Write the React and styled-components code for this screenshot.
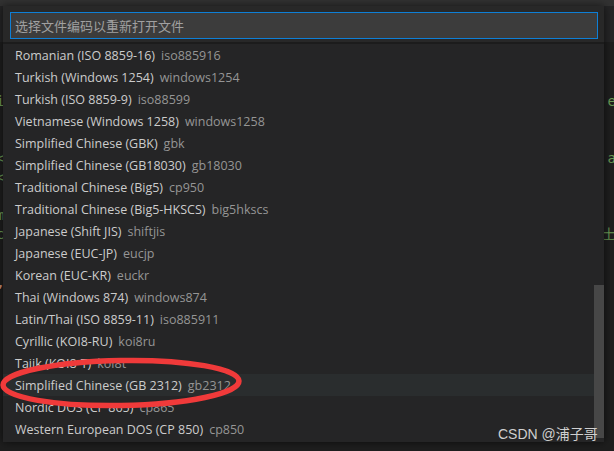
import React from "react";
import styled, { createGlobalStyle } from "styled-components";

const GlobalStyle = createGlobalStyle`
  html, body { margin: 0; padding: 0; background: #1e1e1e; overflow: hidden; }
  #root { width: 614px; height: 451px; }
`;

const Window = styled.div`
  position: relative;
  width: 614px;
  height: 451px;
  overflow: hidden;
  background: #1e1e1e;
  display: flex;
  flex-direction: column;
`;

const TitleStrip = styled.div`
  height: 6px;
  background: #323232;
  flex: none;
`;

const TabBar = styled.div`
  height: 36px;
  background: #252526;
  flex: none;
`;

const EditorBody = styled.div`
  flex: 1;
  padding-top: 50px;
  display: flex;
  flex-direction: column;
`;

const CodeLine = styled.div`
  height: 19px;
  display: flex;
  justify-content: space-between;
  align-items: center;
  font-family: "DejaVu Sans Mono", monospace;
  font-size: 14px;
  line-height: 19px;
`;

const Glyph = styled.span`
  color: ${(p) => p.$color || "#6a9955"};
  margin-left: ${(p) => (p.$side === "left" ? "-4px" : "0")};
  margin-right: ${(p) => (p.$side === "right" ? "-2px" : "0")};
`;

const QuickPick = styled.div`
  position: absolute;
  left: 3px;
  top: 6px;
  width: 601px;
  height: 436px;
  background: #252526;
  box-shadow: 0 0 8px rgba(0, 0, 0, 0.6);
  display: flex;
  flex-direction: column;
  font-family: "Open Sans", "Noto Sans", sans-serif;
`;

const Header = styled.div`
  background: #282828;
  padding: 6px 6px 3px 7px;
  flex: none;
`;

const InputBox = styled.div`
  height: 25px;
  border: 1px solid #0e7fd6;
  background: #3c3c3c;
  display: flex;
  align-items: center;
  padding-left: 4px;
  font-family: "Noto Sans CJK SC", "Noto Sans", sans-serif;
  font-size: 13px;
  color: #a0a0a0;
`;

const Separator = styled.div`
  height: 2px;
  background: #1c1c1c;
  flex: none;
`;

const List = styled.div`
  position: relative;
  flex: 1;
  display: flex;
  flex-direction: column;
`;

const Row = styled.div`
  height: 22px;
  display: flex;
  align-items: center;
  gap: 6px;
  padding-left: 12px;
  background: ${(p) => (p.$active ? "#2a2d2e" : "transparent")};
  white-space: nowrap;
`;

const Label = styled.span`
  color: #cccccc;
  font-size: 12.5px;
`;

const Desc = styled.span`
  color: #959595;
  font-size: 12.5px;
`;

const ScrollThumb = styled.div`
  position: absolute;
  right: 0;
  top: 241px;
  width: 10px;
  height: 153px;
  background: #474747;
`;

const Annotation = styled.svg`
  position: absolute;
  left: 0;
  top: 354px;
  pointer-events: none;
`;

const Watermark = styled.div`
  position: absolute;
  left: 498px;
  top: 424px;
  font-family: "Liberation Sans", "Noto Sans CJK SC", sans-serif;
  font-size: 14px;
  line-height: 20px;
  color: #cfcfcf;
  white-space: nowrap;
`;

const items = [
  ["Romanian (ISO 8859-16)", "iso885916"],
  ["Turkish (Windows 1254)", "windows1254"],
  ["Turkish (ISO 8859-9)", "iso88599"],
  ["Vietnamese (Windows 1258)", "windows1258"],
  ["Simplified Chinese (GBK)", "gbk"],
  ["Simplified Chinese (GB18030)", "gb18030"],
  ["Traditional Chinese (Big5)", "cp950"],
  ["Traditional Chinese (Big5-HKSCS)", "big5hkscs"],
  ["Japanese (Shift JIS)", "shiftjis"],
  ["Japanese (EUC-JP)", "eucjp"],
  ["Korean (EUC-KR)", "euckr"],
  ["Thai (Windows 874)", "windows874"],
  ["Latin/Thai (ISO 8859-11)", "iso885911"],
  ["Cyrillic (KOI8-RU)", "koi8ru"],
  ["Tajik (KOI8-T)", "koi8t"],
  ["Simplified Chinese (GB 2312)", "gb2312"],
  ["Nordic DOS (CP 865)", "cp865"],
  ["Western European DOS (CP 850)", "cp850"],
];

const codeLines = [
  { l: "i", r: "e" },
  {},
  {},
  { l: "<", r: "a" },
  { l: "<" },
  {},
  { l: "m" },
  { l: "c", r: "士" },
  {},
  {},
  { l: "\u2019", lc: "#ce9178" },
];

export default function App() {
  return (
    <>
      <GlobalStyle />
      <Window>
        <TitleStrip />
        <TabBar />
        <EditorBody>
          {codeLines.map((c, i) => (
            <CodeLine key={i}>
              <Glyph $side="left" $color={c.lc}>{c.l || ""}</Glyph>
              <Glyph $side="right">{c.r || ""}</Glyph>
            </CodeLine>
          ))}
        </EditorBody>
        <QuickPick>
          <Header>
            <InputBox>选择文件编码以重新打开文件</InputBox>
          </Header>
          <Separator />
          <List>
            {items.map(([label, desc]) => (
              <Row key={desc} $active={desc === "gb2312"}>
                <Label>{label}</Label>
                <Desc>{desc}</Desc>
              </Row>
            ))}
            <ScrollThumb />
          </List>
        </QuickPick>
        <Annotation width="246" height="58" viewBox="0 0 246 58">
          <ellipse
            cx="121"
            cy="29"
            rx="118"
            ry="22.5"
            fill="none"
            stroke="#f03a3a"
            strokeWidth="5.5"
            transform="rotate(-1 121 29)"
          />
        </Annotation>
        <Watermark>CSDN @浦子哥</Watermark>
      </Window>
    </>
  );
}
